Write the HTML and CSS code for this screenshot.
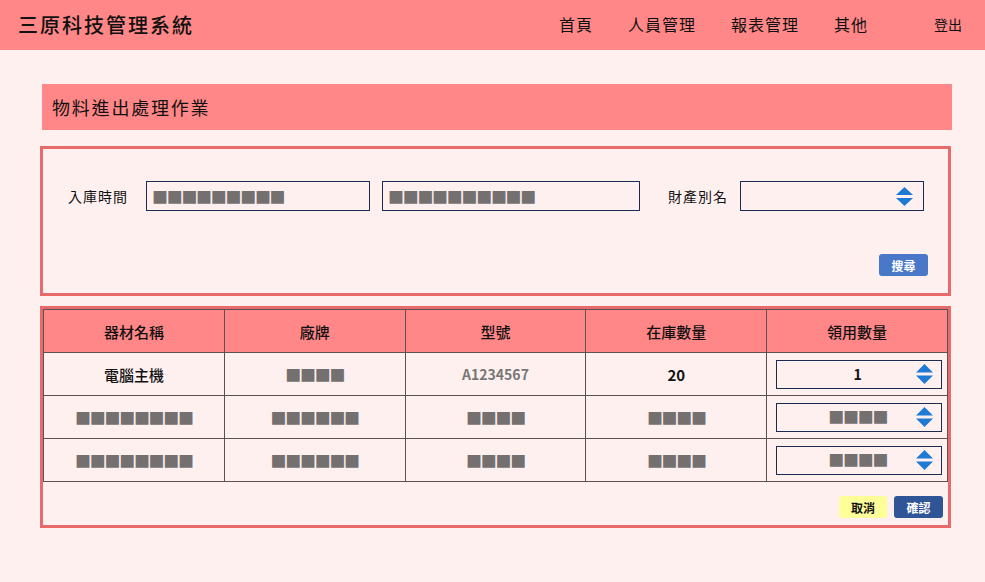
FILE: index.html
```html
<!DOCTYPE html>
<html lang="zh-Hant">
<head>
<meta charset="utf-8">
<title>三原科技管理系統</title>
<link rel="stylesheet" href="styles.css">
</head>
<body>
<header class="topbar">
  <div class="brand">三原科技管理系統</div>
  <nav class="nav">
    <a class="nav-item">首頁</a>
    <a class="nav-item">人員管理</a>
    <a class="nav-item">報表管理</a>
    <a class="nav-item">其他</a>
    <a class="nav-item logout">登出</a>
  </nav>
</header>

<main class="main">
  <div class="page-title">物料進出處理作業</div>

  <section class="panel search-panel">
    <div class="search-row">
      <span class="label">入庫時間</span>
      <div class="field f1"><span class="mask">■■■■■■■■■</span></div>
      <div class="field f2"><span class="mask">■■■■■■■■■■</span></div>
      <span class="label label2">財產別名</span>
      <div class="field f3">
        <svg class="spin" width="17" height="19" viewBox="0 0 17 19"><polygon points="0,8 8.5,0 17,8" fill="#1f7ad4"/><polygon points="0,11 17,11 8.5,19" fill="#1f7ad4"/></svg>
      </div>
    </div>
    <div class="search-actions">
      <button class="btn btn-search">搜尋</button>
    </div>
  </section>

  <section class="panel table-panel">
    <table class="grid">
      <thead>
        <tr><th>器材名稱</th><th>廠牌</th><th>型號</th><th>在庫數量</th><th>領用數量</th></tr>
      </thead>
      <tbody>
        <tr>
          <td class="name">電腦主機</td>
          <td><span class="mask">■■■■</span></td>
          <td class="model">A1234567</td>
          <td class="strong">20</td>
          <td><div class="qty"><span class="qty-val strong">1</span><svg class="spin" width="17" height="20" viewBox="0 0 17 20"><polygon points="0,8.5 8.5,0 17,8.5" fill="#1f7ad4"/><polygon points="0,11.5 17,11.5 8.5,20" fill="#1f7ad4"/></svg></div></td>
        </tr>
        <tr>
          <td><span class="mask">■■■■■■■■</span></td>
          <td><span class="mask">■■■■■■</span></td>
          <td><span class="mask">■■■■</span></td>
          <td><span class="mask">■■■■</span></td>
          <td><div class="qty"><span class="qty-val"><span class="mask">■■■■</span></span><svg class="spin" width="17" height="20" viewBox="0 0 17 20"><polygon points="0,8.5 8.5,0 17,8.5" fill="#1f7ad4"/><polygon points="0,11.5 17,11.5 8.5,20" fill="#1f7ad4"/></svg></div></td>
        </tr>
        <tr>
          <td><span class="mask">■■■■■■■■</span></td>
          <td><span class="mask">■■■■■■</span></td>
          <td><span class="mask">■■■■</span></td>
          <td><span class="mask">■■■■</span></td>
          <td><div class="qty"><span class="qty-val"><span class="mask">■■■■</span></span><svg class="spin" width="17" height="20" viewBox="0 0 17 20"><polygon points="0,8.5 8.5,0 17,8.5" fill="#1f7ad4"/><polygon points="0,11.5 17,11.5 8.5,20" fill="#1f7ad4"/></svg></div></td>
        </tr>
      </tbody>
    </table>
    <div class="table-actions">
      <button class="btn btn-cancel">取消</button>
      <button class="btn btn-ok">確認</button>
    </div>
  </section>
</main>
</body>
</html>
```

FILE: styles.css
```css
* { box-sizing: border-box; }
html, body { margin: 0; padding: 0; }
body {
  background: #fff0f0;
  font-family: "Noto Sans CJK TC", "Noto Sans", sans-serif;
  color: #111;
  width: 985px;
  height: 582px;
  overflow: hidden;
}

.topbar {
  height: 50px;
  background: #ff8787;
  display: flex;
  align-items: center;
  justify-content: space-between;
  padding: 0 23px 2px 18px;
}
.brand {
  font-size: 20px;
  letter-spacing: 2px;
  font-weight: 500;
  color: #111;
}
.nav { display: flex; align-items: center; }
.nav-item {
  font-size: 16px;
  letter-spacing: 1px;
  color: #111;
  margin-left: 35px;
}
.nav-item:first-child { margin-left: 0; }
.nav-item.logout { font-size: 14px; margin-left: 66px; letter-spacing: 0; }

.main { padding-top: 34px; }

.page-title {
  margin-left: 42px;
  width: 910px;
  height: 46px;
  background: #ff8787;
  display: flex;
  align-items: center;
  padding-left: 10px;
  font-size: 18px;
  letter-spacing: 1.8px;
  color: #111;
}

.panel {
  margin-left: 40px;
  width: 911px;
  border: 3px solid #e86a6a;
}
.search-panel {
  margin-top: 16px;
  height: 150px;
  padding: 32px 20px 0 25px;
}
.search-row { display: flex; align-items: center; height: 30px; }
.label { font-size: 14px; letter-spacing: 1px; white-space: nowrap; }
.label2 { margin-left: 28px; }
.field {
  height: 30px;
  border: 1px solid #1c2b52;
  background: #fff0f0;
  display: flex;
  align-items: center;
  padding-left: 5px;
}
.f1 { width: 224px; margin-left: 18px; }
.f2 { width: 258px; margin-left: 12px; }
.f3 { width: 184px; margin-left: 12px; justify-content: flex-end; padding-right: 10px; }

.mask {
  color: #757070;
  font-size: 16px;
  letter-spacing: -1.3px;
  line-height: 1;
  font-weight: 400;
}

.search-actions {
  display: flex;
  justify-content: flex-end;
  margin-top: 43px;
}

.btn {
  border: none;
  border-radius: 3px;
  height: 22px;
  font-family: "Noto Sans CJK TC", sans-serif;
  font-size: 12px;
  font-weight: 700;
  padding: 0;
  width: 49px;
  display: flex;
  align-items: center;
  justify-content: center;
}
.btn-search { background: #4a78c8; color: #fff; }
.btn-cancel { background: #ffff99; color: #111; width: 48px; }
.btn-ok { background: #2f5597; color: #fff; margin-left: 7px; }

.table-panel { margin-top: 10px; height: 222px; }
.grid {
  border-collapse: collapse;
  width: 905px;
  table-layout: fixed;
}
.grid th, .grid td {
  border: 1px solid #5a5252;
  height: 43px;
  text-align: center;
  font-size: 15px;
  padding: 0;
}
.grid th { background: #ff8787; font-weight: 500; }
.grid td.name { font-weight: 500; }
.strong { font-weight: 700; }
.grid td.model { color: #777; font-weight: 700; font-size: 14px; }

.qty {
  margin: 0 0 0 9px;
  width: 166px;
  height: 29px;
  border: 1px solid #1c2b52;
  display: flex;
  align-items: center;
  padding-right: 8px;
}
.qty-val { flex: 1; text-align: center; padding-left: 22px; font-size: 14px; }

.table-actions {
  display: flex;
  justify-content: flex-end;
  padding-right: 5px;
  margin-top: 14px;
}
```
